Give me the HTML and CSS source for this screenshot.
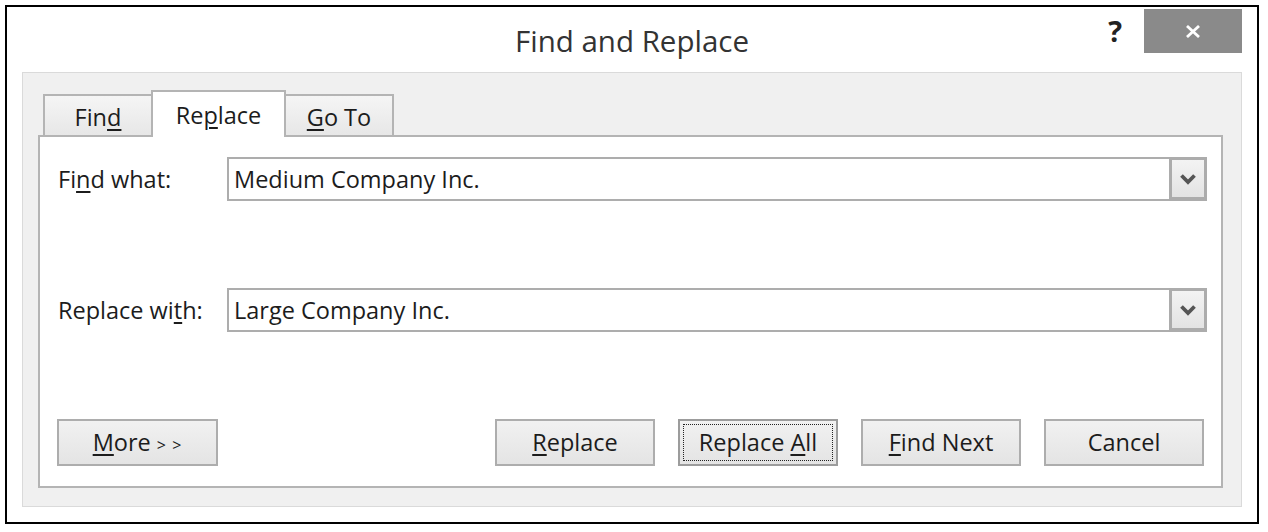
FILE: index.html
```html
<!DOCTYPE html>
<html>
<head>
<meta charset="utf-8">
<title>Find and Replace</title>
<link rel="stylesheet" href="styles.css">
</head>
<body>
<div class="dialog">
  <div class="titlebar">
    <div class="tb-left"></div>
    <div class="title">Find and Replace</div>
    <div class="tb-right">
      <span class="help">?</span>
      <div class="close">
        <svg width="16" height="13" viewBox="0 0 16 13"><path d="M2 1 L14 12 M14 1 L2 12" stroke="#fff" stroke-width="2.8" fill="none"/></svg>
      </div>
    </div>
  </div>
  <div class="panel">
    <div class="tabs">
      <div class="tab tab-find">Fin<u>d</u></div>
      <div class="tab tab-replace active">Re<u>p</u>lace</div>
      <div class="tab tab-goto"><u>G</u>o To</div>
    </div>
    <div class="content">
      <div class="row">
        <div class="label">Fi<u>n</u>d what:</div>
        <div class="combo">
          <div class="field">Medium Company Inc.</div>
          <div class="drop"><svg width="16" height="12" viewBox="0 0 16 12"><path d="M1.5 2.5 L8 9 L14.5 2.5" stroke="#555" stroke-width="3.8" fill="none"/></svg></div>
        </div>
      </div>
      <div class="row">
        <div class="label">Replace wi<u>t</u>h:</div>
        <div class="combo">
          <div class="field">Large Company Inc.</div>
          <div class="drop"><svg width="16" height="12" viewBox="0 0 16 12"><path d="M1.5 2.5 L8 9 L14.5 2.5" stroke="#555" stroke-width="3.8" fill="none"/></svg></div>
        </div>
      </div>
      <div class="buttons">
        <div class="btn"><u>M</u>ore <span class="gt">&gt; &gt;</span></div>
        <div class="btn-group">
          <div class="btn"><u>R</u>eplace</div>
          <div class="btn focused">Replace <u>A</u>ll</div>
          <div class="btn"><u>F</u>ind Next</div>
          <div class="btn">Cancel</div>
        </div>
      </div>
    </div>
  </div>
</div>
</body>
</html>
```
FILE: styles.css
```css
* { box-sizing: border-box; }
html, body { margin: 0; padding: 0; background: #fff; }
body {
  font-family: "Open Sans", "Noto Sans", sans-serif;
  color: #1c1c1c;
  font-size: 23.5px;
}
u { text-decoration-thickness: 1.5px; text-underline-offset: 3px; }

.dialog {
  margin: 5px;
  width: 1254px;
  height: 519px;
  border: 2px solid #000;
  display: flex;
  flex-direction: column;
}

.titlebar {
  height: 65px;
  flex: none;
  display: grid;
  grid-template-columns: 1fr auto 1fr;
  align-items: start;
}
.title {
  font-size: 29.5px;
  line-height: 34px;
  padding-top: 17px;
  color: #333;
  white-space: nowrap;
}
.tb-right {
  display: flex;
  justify-content: flex-end;
  align-items: flex-start;
  padding-top: 2px;
  padding-right: 15px;
}
.help {
  font-size: 29px;
  font-weight: 700;
  line-height: 44px;
  color: #222;
  margin-right: 22px;
}
.close {
  width: 98px;
  height: 44px;
  background: #8a8a8a;
  display: flex;
  align-items: center;
  justify-content: center;
}

.panel {
  flex: 1;
  margin: 0 15px 15px 15px;
  border: 1px solid #dadada;
  background: #f0f0f0;
  padding: 17px 18px 18px 15px;
  display: flex;
  flex-direction: column;
}

.tabs {
  display: flex;
  align-items: flex-end;
  height: 47px;
  flex: none;
  padding-left: 5px;
  margin-bottom: -2px;
  position: relative;
  z-index: 1;
}
.tab {
  height: 43px;
  border: 2px solid #b4b4b4;
  background: linear-gradient(#f5f5f5, #e7e7e7);
  text-align: center;
  line-height: 32px;
  padding-top: 5px;
  white-space: nowrap;
}
.tab-find { width: 110px; }
.tab-replace { width: 135px; margin-left: -2px; }
.tab-goto { width: 110px; margin-left: -2px; }
.tab.active {
  height: 47px;
  background: #fff;
  border-bottom: none;
  padding-top: 7px;
  position: relative;
  z-index: 2;
}

.content {
  flex: 1;
  background: #fff;
  border: 2px solid #b4b4b4;
  padding: 20px 14px 20px 17px;
  display: flex;
  flex-direction: column;
  gap: 87px;
}

.row {
  display: flex;
  height: 44px;
}
.label {
  width: 170px;
  line-height: 44px;
  padding-left: 1px;
  white-space: nowrap;
}
.combo {
  flex: 1;
  display: flex;
}
.field {
  flex: 1;
  border: 2px solid #adadad;
  border-right: none;
  line-height: 40px;
  padding-left: 5px;
  white-space: nowrap;
}
.drop {
  width: 38px;
  border: 3px solid #acacac;
  border-bottom-width: 4px;
  background: linear-gradient(#f3f3f3, #e3e3e3);
  display: flex;
  align-items: center;
  justify-content: center;
}

.buttons {
  display: flex;
  height: 47px;
  margin-right: 3px;
}
.btn-group {
  margin-left: auto;
  display: flex;
  gap: 23px;
}
.btn {
  width: 160px;
  height: 47px;
  border: 2px solid #adadad;
  background: linear-gradient(#f1f1f1, #e4e4e4);
  text-align: center;
  line-height: 43px;
  white-space: nowrap;
}
.buttons > .btn { width: 161px; }
.btn .gt { font-size: 16px; letter-spacing: 1px; }
.btn.focused {
  border-color: #9c9c9c;
  outline: 1px dotted #222;
  outline-offset: -6px;
}
```
